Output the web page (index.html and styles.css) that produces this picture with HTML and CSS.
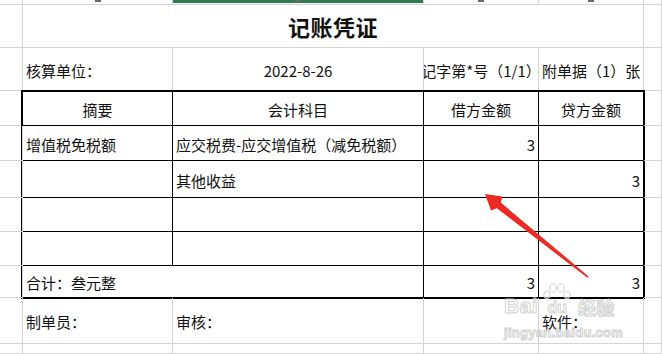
FILE: index.html
```html
<!DOCTYPE html>
<html lang="zh-CN">
<head>
<meta charset="utf-8">
<title>记账凭证</title>
<link rel="stylesheet" href="styles.css">
</head>
<body>
<div class="sheet">
  <!-- column header remnants -->
  <div class="c hdr"></div>
  <div class="c hdr"><i class="tick"></i></div>
  <div class="c hdr sel"><i class="tick"></i></div>
  <div class="c hdr"><i class="tick"></i></div>
  <div class="c hdr"><i class="tick"></i></div>
  <div class="c hdr"></div>

  <!-- title -->
  <div class="c"></div>
  <div class="c m title span4">记账凭证</div>
  <div class="c"></div>

  <!-- info row -->
  <div class="c"></div>
  <div class="c l">核算单位：</div>
  <div class="c m">2022-8-26</div>
  <div class="c m clip"><span>记字第*号（1/1）</span></div>
  <div class="c l">附单据（1）张</div>
  <div class="c"></div>

  <!-- voucher table -->
  <div class="c"></div>
  <div class="table">
    <div class="c t m">摘要</div>
    <div class="c t m">会计科目</div>
    <div class="c t m">借方金额</div>
    <div class="c t m end">贷方金额</div>

    <div class="c t l">增值税免税额</div>
    <div class="c t l">应交税费-应交增值税（减免税额）</div>
    <div class="c t r">3</div>
    <div class="c t r end"></div>

    <div class="c t l"></div>
    <div class="c t l">其他收益</div>
    <div class="c t r"></div>
    <div class="c t r end">3</div>

    <div class="c t"></div>
    <div class="c t"></div>
    <div class="c t"></div>
    <div class="c t end"></div>

    <div class="c t"></div>
    <div class="c t"></div>
    <div class="c t"></div>
    <div class="c t end"></div>

    <div class="c t l span2 last">合计：叁元整</div>
    <div class="c t r last">3</div>
    <div class="c t r end last">3</div>
  </div>
  <div class="c"></div>

  <div class="c"></div><div class="c"></div>
  <div class="c"></div><div class="c"></div>
  <div class="c"></div><div class="c"></div>
  <div class="c"></div><div class="c"></div>
  <div class="c"></div><div class="c"></div>

  <!-- signatures -->
  <div class="c"></div>
  <div class="c l">制单员：</div>
  <div class="c l">审核：</div>
  <div class="c"></div>
  <div class="c l">软件：</div>
  <div class="c"></div>

  <!-- last partial row -->
  <div class="c"></div>
  <div class="c"></div>
  <div class="c"></div>
  <div class="c"></div>
  <div class="c"></div>
  <div class="c"></div>
</div>

<svg class="arrow" width="662" height="354" viewBox="0 0 662 354">
  <polygon fill="#ec2a23" points="485,194 502.5,196.5 500.8,202.6 588.6,276.4 587.4,277.8 496.8,208.2 491,210.6"/>
</svg>

<div class="watermark">
  <div class="wm-top">
    <span class="wm-bai">Bai</span>
    <span class="wm-paw">
      <svg width="32" height="20" viewBox="0 0 32 20">
        <ellipse cx="6" cy="12" rx="3.2" ry="4" />
        <ellipse cx="12" cy="5" rx="3.2" ry="4.2" />
        <ellipse cx="20" cy="5" rx="3.2" ry="4.2" />
        <ellipse cx="26" cy="12" rx="3.2" ry="4" />
      </svg>
      <span class="wm-du">du</span>
    </span>
    <span class="wm-jy">经验</span>
  </div>
  <div class="wm-url">jingyan.baidu.com</div>
</div>
</body>
</html>
```
FILE: styles.css
```css
* {
  box-sizing: border-box;
  margin: 0;
  padding: 0;
}

html, body {
  width: 662px;
  height: 354px;
  overflow: hidden;
  background: #ffffff;
}

body {
  position: relative;
  font-family: "Noto Sans CJK SC", "Noto Sans", sans-serif;
  font-size: 15px;
  color: #111111;
}

.sheet {
  display: grid;
  grid-template-columns: 23px 150px 251px 115px 105px 1fr;
  grid-template-rows: 5px 43px 43px 35px 35px 37px 34px 34px 32px 46px 1fr;
  height: 354px;
}

.c {
  display: flex;
  align-items: center;
  min-width: 0;
  overflow: hidden;
  white-space: nowrap;
  line-height: 1;
  padding: 2px 3px 0 3px;
  border-right: 1px solid #d4d4d4;
  border-bottom: 1px solid #d4d4d4;
}

.hdr {
  align-items: flex-start;
  justify-content: center;
  padding: 0;
}

.tick {
  display: block;
  width: 6px;
  height: 2px;
  background: #6a6a6a;
}

.sel {
  background: linear-gradient(#2f7a4f 0 3px, transparent 3px);
}

.table {
  grid-column: span 4;
  grid-row: span 6;
  margin: -1px -1px -1px -2px;
  border: 2px solid #000000;
  display: grid;
  grid-template-columns: 150px 251px 115px 1fr;
  grid-template-rows: 34px 35px 37px 34px 34px 1fr;
}

.t {
  border-right-color: #000000;
  border-bottom-color: #000000;
}

.t.end {
  border-right: none;
}

.t.last {
  border-bottom: none;
}

.l { justify-content: flex-start; }
.m { justify-content: center; }
.r { justify-content: flex-end; }

.clip {
  padding-left: 0;
  padding-right: 0;
}

.clip span {
  flex-shrink: 0;
}

.span4 { grid-column: span 4; }
.span2 { grid-column: span 2; }

.title {
  font-size: 22px;
  font-weight: 700;
  letter-spacing: 0.5px;
  padding-top: 0;
}

.arrow {
  position: absolute;
  left: 0;
  top: 0;
  pointer-events: none;
}

.watermark {
  position: absolute;
  left: 504px;
  top: 280px;
  width: 130px;
  pointer-events: none;
  font-family: "Liberation Sans", Arial, sans-serif;
  color: rgba(255, 255, 255, 0.55);
  -webkit-text-stroke: 1px rgba(200, 200, 200, 0.85);
}

.wm-top {
  display: flex;
  align-items: flex-end;
  height: 36px;
}

.wm-bai {
  font-size: 21px;
  font-weight: 700;
  line-height: 1;
  letter-spacing: 0.5px;
}

.wm-paw {
  display: flex;
  flex-direction: column;
  align-items: center;
  margin-left: 3px;
  width: 32px;
}

.wm-paw svg {
  fill: rgba(255, 255, 255, 0.5);
  stroke: rgba(200, 200, 200, 0.85);
  stroke-width: 1;
}

.wm-du {
  font-size: 16px;
  font-weight: 700;
  line-height: 1;
  margin-top: -3px;
}

.wm-jy {
  font-family: "Noto Sans CJK SC", sans-serif;
  font-size: 18px;
  font-weight: 700;
  line-height: 1;
  margin-left: 5px;
}

.wm-url {
  margin-top: 10px;
  font-size: 13px;
  font-weight: 700;
  line-height: 1;
  letter-spacing: 0.3px;
}
```
